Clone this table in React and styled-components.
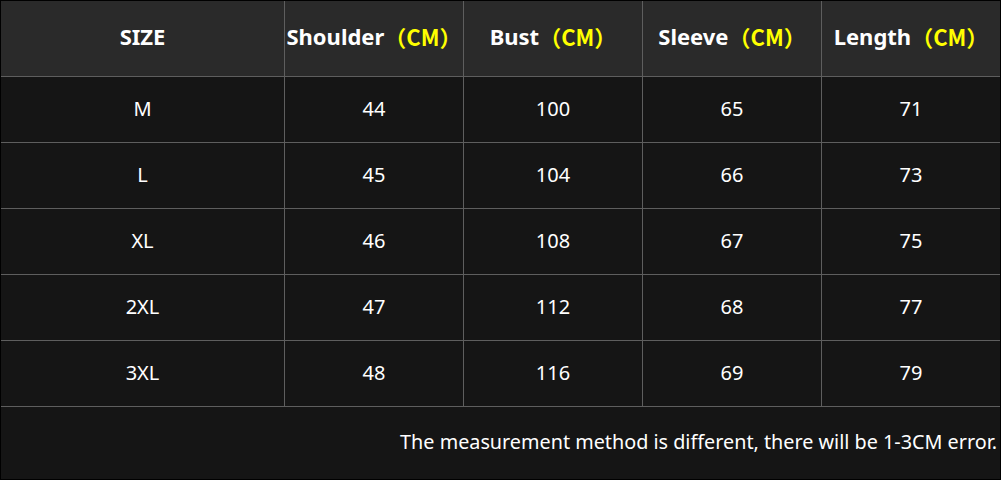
import React from 'react';
import styled, { createGlobalStyle } from 'styled-components';

const GlobalStyle = createGlobalStyle`
    html, body {
        margin: 0;
        padding: 0;
        background: #000;
    }
    body {
        font-family: "Noto Sans", "Noto Sans CJK SC", sans-serif;
    }
`;

const Sheet = styled.div`
    width: 1001px;
    height: 480px;
    box-sizing: border-box;
    border: 1px solid #000;
    background: #5e5e5e;
    display: grid;
    grid-template-columns: 283px repeat(4, 178px);
    grid-template-rows: 75px repeat(5, 65px) 72px;
    gap: 1px;
`;

const HeadCell = styled.div`
    background: #2a2a2a;
    color: #fff;
    font-weight: 700;
    font-size: 22px;
    display: flex;
    align-items: center;
    justify-content: center;
    padding-bottom: 5px;
    white-space: nowrap;
`;

const Unit = styled.span`
    color: #ffff00;
    font-family: "Noto Sans CJK SC", "Noto Sans", sans-serif;
    font-weight: 700;
`;

const Cell = styled.div`
    background: #151515;
    color: #fff;
    font-size: 20px;
    display: flex;
    align-items: center;
    justify-content: center;
    padding-bottom: 3px;
`;

const Note = styled.div`
    grid-column: 1 / -1;
    background: #151515;
    color: #fff;
    font-size: 19.8px;
    display: flex;
    align-items: center;
    justify-content: flex-end;
    padding: 0 3px 4px 0;
    white-space: nowrap;
`;

const headers = ['Shoulder', 'Bust', 'Sleeve', 'Length'];

const rows = [
    ['M', 44, 100, 65, 71],
    ['L', 45, 104, 66, 73],
    ['XL', 46, 108, 67, 75],
    ['2XL', 47, 112, 68, 77],
    ['3XL', 48, 116, 69, 79],
];

const App = () => {
    return (
        <>
            <GlobalStyle />
            <Sheet>
                <HeadCell>SIZE</HeadCell>
                {headers.map((h) => (
                    <HeadCell key={h}>
                        {h}
                        <Unit>（CM）</Unit>
                    </HeadCell>
                ))}
                {rows.map((r) =>
                    r.map((v, i) => <Cell key={r[0] + i}>{v}</Cell>)
                )}
                <Note>The measurement method is different, there will be 1-3CM error.</Note>
            </Sheet>
        </>
    );
};

export default App;
